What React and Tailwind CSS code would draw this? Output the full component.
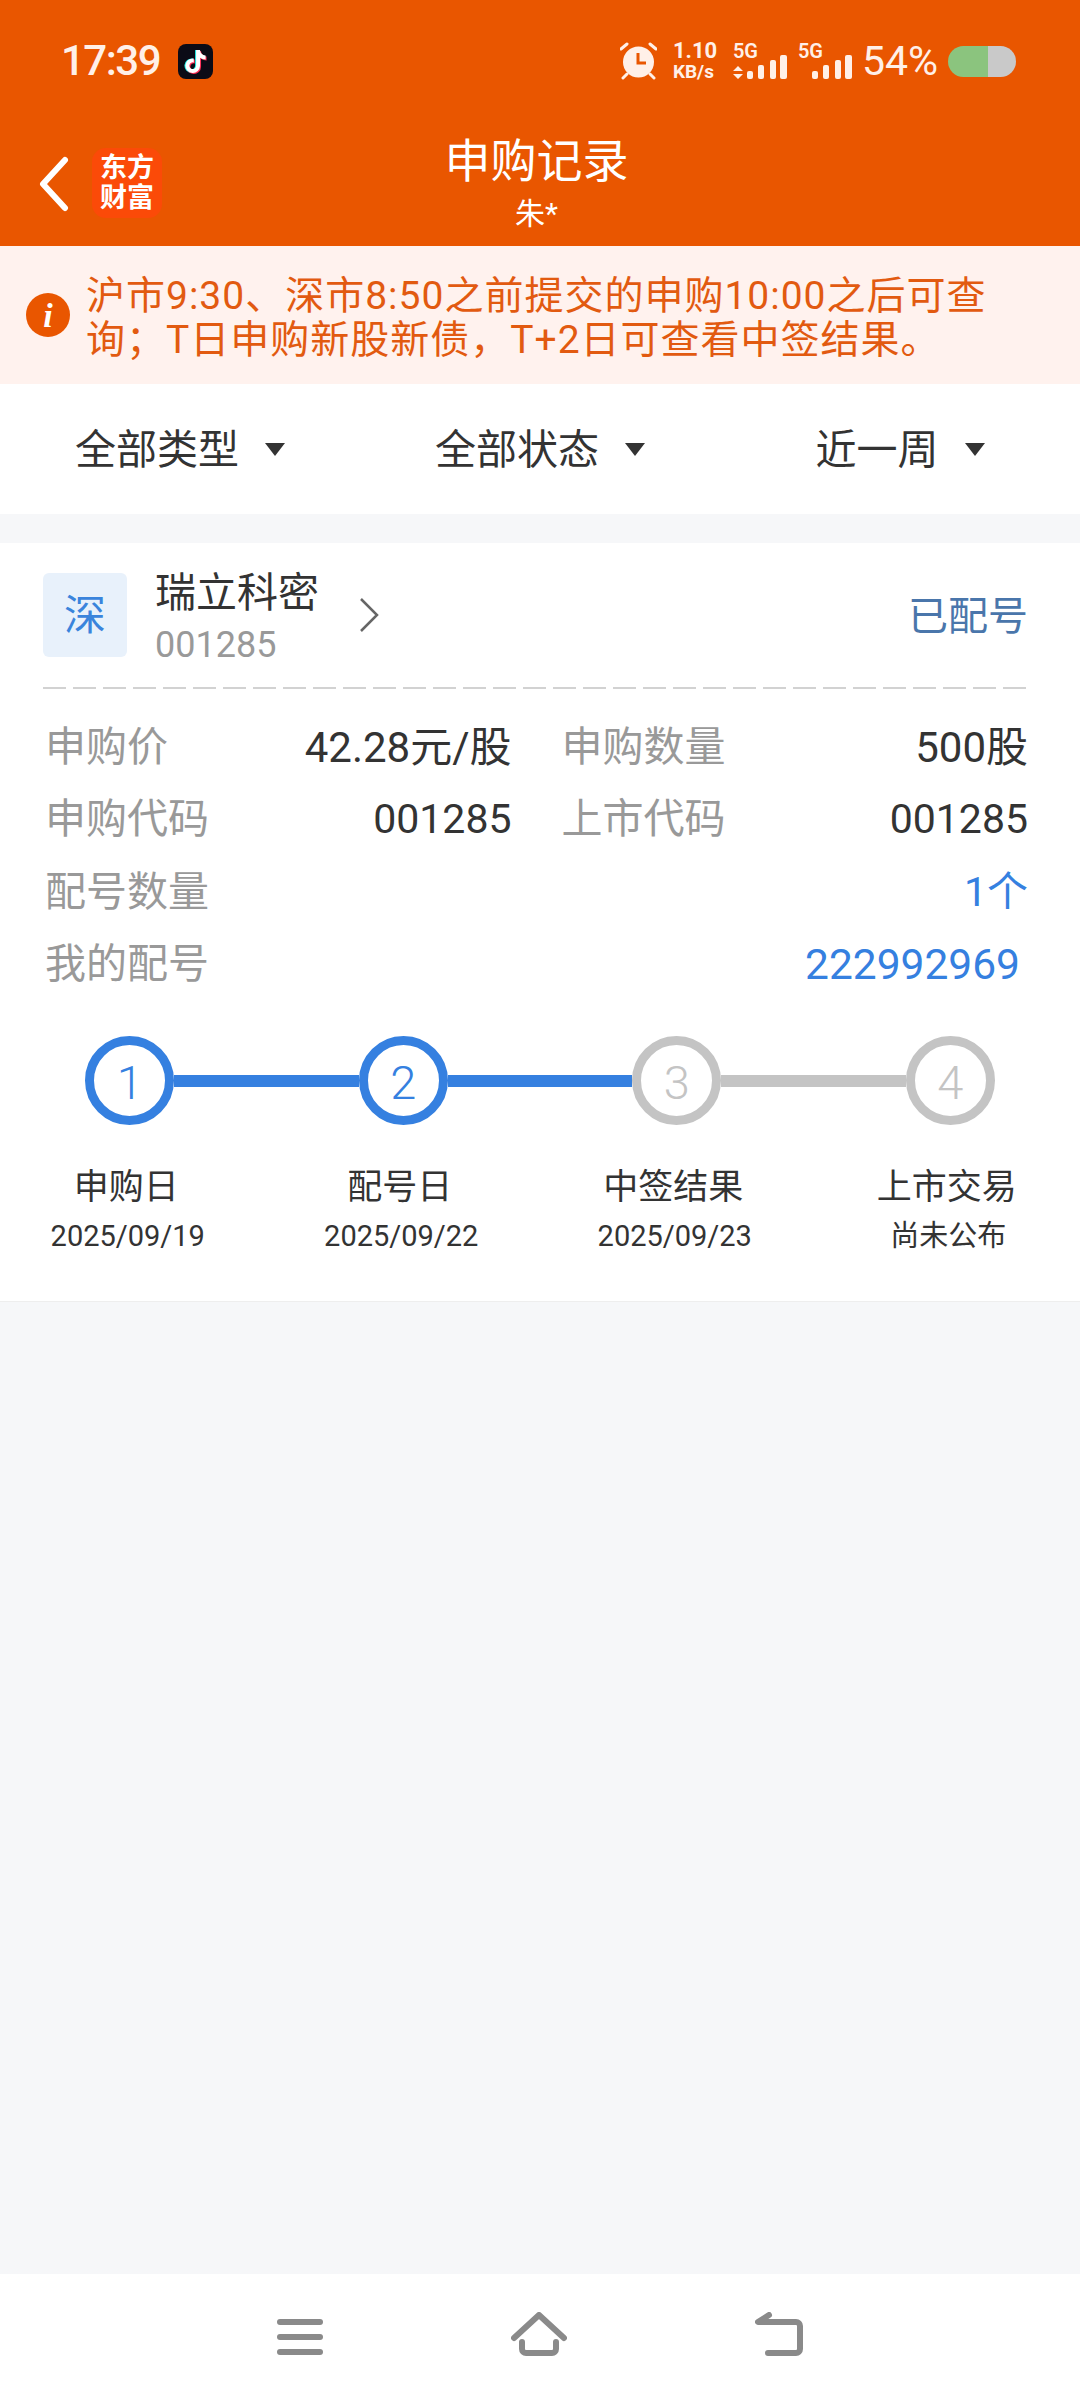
import { FaTiktok } from 'react-icons/fa';

const FONT = "font-['Roboto','Noto_Sans_CJK_SC',sans-serif]";

const filtros = ['全部类型', '全部状态', '近一周'];

const filas = [
  { izq: '申购价', val: '42.28元/股', der: '申购数量', val2: '500股', tam: 'text-[42px]' },
  { izq: '申购代码', val: '001285', der: '上市代码', val2: '001285', tam: 'text-[41px]' },
];

const pasos = [
  { n: 1, titulo: '申购日', fecha: '2025/09/19', circulo: 'border-[#3580e0] text-[#3580e0]', izq: 'bg-transparent', der: 'bg-[#3580e0]' },
  { n: 2, titulo: '配号日', fecha: '2025/09/22', circulo: 'border-[#3580e0] text-[#3580e0]', izq: 'bg-[#3580e0]', der: 'bg-[#3580e0]' },
  { n: 3, titulo: '中签结果', fecha: '2025/09/23', circulo: 'border-[#c4c4c4] text-[#c4c4c4]', izq: 'bg-[#3580e0]', der: 'bg-[#c4c4c4]' },
  { n: 4, titulo: '上市交易', fecha: '尚未公布', circulo: 'border-[#c4c4c4] text-[#c4c4c4]', izq: 'bg-[#c4c4c4]', der: 'bg-transparent' },
];

const Senal = ({ flechas }) => (
  <div className="flex flex-col w-[54px] h-[37px] relative">
    <span className="text-[20px] leading-[16px] font-semibold">5G</span>
    <svg width="54" height="24" viewBox="0 0 54 24" className="absolute left-0 top-[12px]" fill="#fff0e8">
      {flechas && <path d="M5 11l5 5H0zM5 24l-5-5h10z" />}
      <rect x="14" y="16" width="6" height="8" rx="2" />
      <rect x="25" y="10" width="6" height="14" rx="2" />
      <rect x="37" y="5" width="6" height="19" rx="2" />
      <rect x="47" y="0" width="7" height="24" rx="2" />
    </svg>
  </div>
);

const Alarma = () => (
  <svg width="37" height="38" viewBox="0 0 37 38" fill="none">
    <circle cx="18.5" cy="20" r="15.5" fill="#fff0e8" />
    <path d="M18 11v10h8" stroke="#e95600" strokeWidth="3" />
    <path d="M1 7l6-5M36 7l-6-5M3 36l4-4M34 36l-4-4" stroke="#fff0e8" strokeWidth="3" strokeLinecap="round" />
  </svg>
);

const TikTok = () => (
  <div className="relative w-[35px] h-[35px] rounded-[8px] bg-[#0b0b16] flex items-center justify-center">
    <FaTiktok size={23} color="#25f4ee" className="absolute left-[5px] top-[6px]" />
    <FaTiktok size={23} color="#fe2c55" className="absolute left-[7px] top-[7px]" />
    <FaTiktok size={23} color="#ffffff" className="absolute left-[6px] top-[6px]" />
  </div>
);

const App = () => {
  return (
    <div className={`${FONT} w-[1080px] min-h-[2400px] flex flex-col bg-[#f6f7f9] text-[#333333]`}>
      {/* Cabecera */}
      <div className="bg-[#e95600] h-[246px] flex flex-col">
        <div className="h-[122px] flex items-center justify-between pl-[61px] pr-[64px] text-[#fff0e8]">
          <div className="flex items-center gap-[18px]">
            <span className="text-[42px] tracking-[-1.5px] font-medium leading-none">17:39</span>
            <TikTok />
          </div>
          <div className="flex items-center">
            <Alarma />
            <div className="ml-[16px] w-[60px] flex flex-col font-bold">
              <span className="text-[22px] leading-[21px]">1.10</span>
              <span className="text-[19px] leading-[21px]">KB/s</span>
            </div>
            <Senal flechas />
            <div className="w-[11px]" />
            <Senal />
            <span className="ml-[10px] text-[41px] leading-none">54%</span>
            <div className="ml-[10px] w-[68px] h-[31px] rounded-full overflow-hidden flex">
              <div className="w-[40px] bg-[#8bc47e]" />
              <div className="flex-1 bg-[#c9c9c9]" />
            </div>
          </div>
        </div>
        <div className="flex-1 grid grid-cols-[1fr_auto_1fr]">
          <div className="flex items-start pl-[38px] pt-[24px]">
            <svg width="32" height="56" viewBox="0 0 32 56" fill="none" className="mt-[10px]">
              <path d="M27 4L5 28l22 24" stroke="#ffffff" strokeWidth="6" strokeLinecap="round" strokeLinejoin="round" />
            </svg>
            <div className="ml-[22px] w-[70px] h-[70px] mt-[2px] rounded-[14px] bg-[#fb4a08] flex flex-col items-center justify-center text-white font-bold text-[27px] leading-[30px]">
              <span>东方</span>
              <span>财富</span>
            </div>
          </div>
          <div className="flex flex-col items-center text-white pt-[10px] pr-[7px]">
            <span className="text-[46px] leading-[58px]">申购记录</span>
            <span className="text-[30px] leading-[40px] mt-[4px]">朱*</span>
          </div>
          <div />
        </div>
      </div>

      {/* Aviso */}
      <div className="bg-[#fff2ee] h-[138px] flex items-center pl-[26px] text-[#e25a10]">
        <div className="w-[44px] h-[44px] rounded-full bg-[#e95600] flex items-center justify-center text-white text-[34px] font-bold italic font-['Liberation_Serif',serif] shrink-0">
          i
        </div>
        <p className="ml-[16px] mt-[5px] text-[39px] leading-[44px] tracking-[1px] whitespace-nowrap">
          沪市9:30、深市8:50之前提交的申购10:00之后可查
          <br />
          询；T日申购新股新债，T+2日可查看中签结果。
        </p>
      </div>

      {/* Filtros */}
      <div className="bg-white h-[130px] grid grid-cols-3">
        {filtros.map((f) => (
          <div key={f} className="flex items-center justify-center">
            <span className="text-[41px] leading-none mt-[2px]">{f}</span>
            <svg width="20" height="13" viewBox="0 0 20 13" className="ml-[26px]" fill="#333333">
              <path d="M0 0h20L10 13z" />
            </svg>
          </div>
        ))}
      </div>

      {/* Tarjeta */}
      <div className="mt-[29px] bg-white border-b border-[#eeeeee] pb-[45px]">
        <div className="pl-[43px] pr-[52px]">
          <div className="flex h-[144px] pt-[25px]">
            <div className="mt-[5px] w-[84px] h-[84px] rounded-[6px] bg-[#e8f1fb] flex items-center justify-center text-[#3a84dc] text-[42px]">
              深
            </div>
            <div className="ml-[28px] flex flex-col">
              <span className="text-[41px] leading-[50px]">瑞立科密</span>
              <span className="text-[36px] leading-[50px] mt-[2px] text-[#999999]">001285</span>
            </div>
            <svg width="20" height="34" viewBox="0 0 20 34" fill="none" className="ml-[40px] mt-[30px]">
              <path d="M2 1l16 16L2 33" stroke="#666666" strokeWidth="2.5" />
            </svg>
            <span className="ml-auto mt-[24px] text-[40px] leading-[50px] text-[#4a76ab]">已配号</span>
          </div>
          <div className="h-[2px] w-[986px] bg-[repeating-linear-gradient(90deg,#d2d2d2_0,#d2d2d2_23px,transparent_23px,transparent_30px)]" />

          <div className="mt-[22px] pl-[2px] text-[41px]">
            {filas.map((fila) => (
              <div key={fila.izq} className="h-[72.5px] grid grid-cols-2 gap-x-[50px] items-center">
                <div className="flex justify-between items-center">
                  <span className="text-[#999999]">{fila.izq}</span>
                  <span className={fila.tam}>{fila.val}</span>
                </div>
                <div className="flex justify-between items-center">
                  <span className="text-[#999999]">{fila.der}</span>
                  <span className={fila.tam}>{fila.val2}</span>
                </div>
              </div>
            ))}
            <div className="h-[72.5px] flex justify-between items-center">
              <span className="text-[#999999]">配号数量</span>
              <span className="text-[#3580e0]">1个</span>
            </div>
            <div className="h-[72.5px] flex justify-between items-center pr-[8px]">
              <span className="text-[#999999]">我的配号</span>
              <span className="text-[#3580e0] text-[42.5px]">222992969</span>
            </div>
          </div>
        </div>

        <div className="mt-[35px] mx-[-7px] grid grid-cols-4">
          {pasos.map((p) => (
            <div key={p.n} className="flex flex-col items-center">
              <div className="w-full flex items-center">
                <div className={`flex-1 h-[12px] ${p.izq}`} />
                <div className={`w-[89px] h-[89px] rounded-full border-[9px] bg-white flex items-center justify-center pt-[3px] text-[47px] font-light leading-none ${p.circulo}`}>
                  {p.n}
                </div>
                <div className={`flex-1 h-[12px] ${p.der}`} />
              </div>
              <span className="mt-[38px] pr-[7px] text-[35px] leading-[50px]">{p.titulo}</span>
              <span className="mt-[3px] pr-[4px] text-[29px] leading-[40px]">{p.fecha}</span>
            </div>
          ))}
        </div>
      </div>

      <div className="flex-1" />

      {/* Navegación */}
      <div className="bg-white h-[126px] flex items-start gap-[188px] pl-[277px] pt-[38px]">
        <svg width="46" height="36" viewBox="0 0 46 36" fill="#8a8a8a" className="mt-[7px]">
          <rect x="0" y="0" width="46" height="6" rx="3" />
          <rect x="0" y="15" width="46" height="6" rx="3" />
          <rect x="0" y="30" width="46" height="6" rx="3" />
        </svg>
        <svg width="56" height="44" viewBox="0 0 56 44" fill="none" stroke="#8a8a8a" strokeWidth="6" strokeLinecap="round" strokeLinejoin="round">
          <path d="M3 26L28 3l25 23" />
          <path d="M11 30v7a4 4 0 0 0 4 4h26a4 4 0 0 0 4-4v-7" />
        </svg>
        <svg width="48" height="44" viewBox="0 0 48 44" fill="none" stroke="#8a8a8a" strokeWidth="6" strokeLinecap="round" strokeLinejoin="round">
          <path d="M14 3L3 10h38a4 4 0 0 1 4 4v23a4 4 0 0 1-4 4H13" />
        </svg>
      </div>
    </div>
  );
};

export default App;
